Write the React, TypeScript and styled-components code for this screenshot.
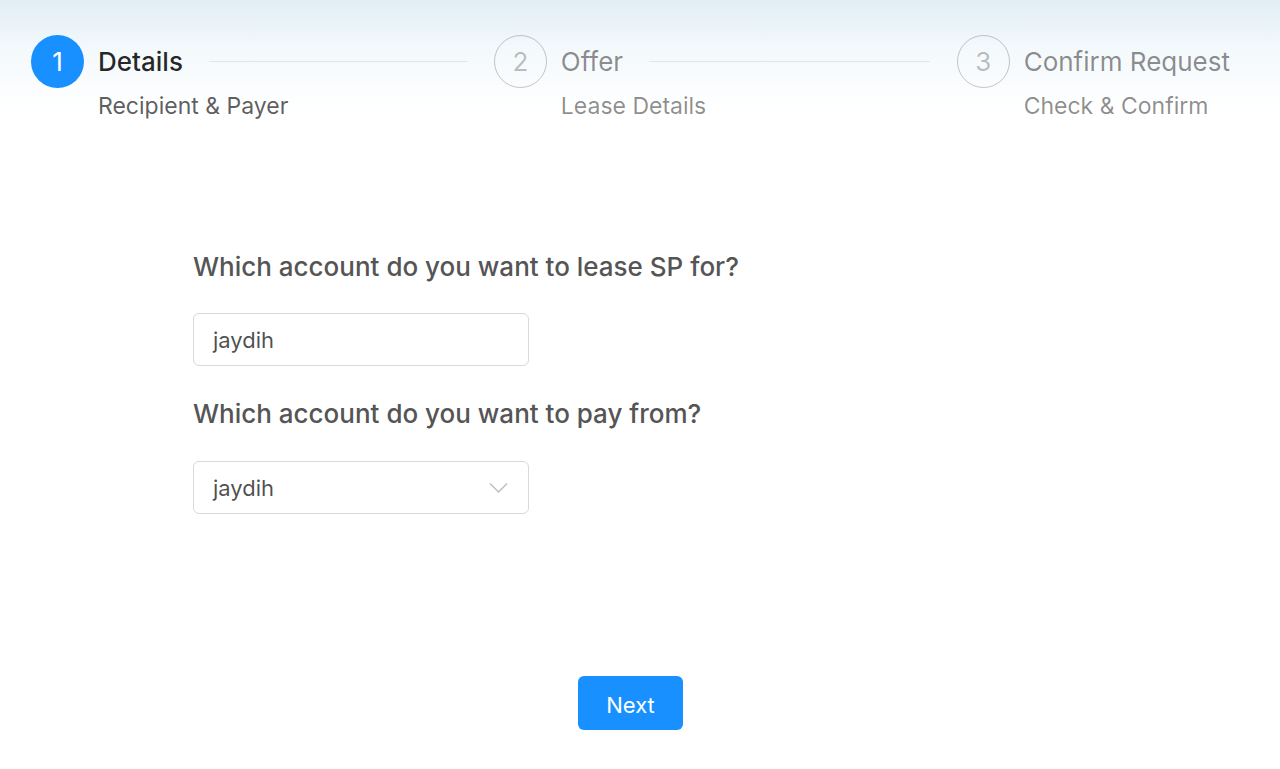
import React from "react";
import styled, { createGlobalStyle } from "styled-components";

const Global = createGlobalStyle`
  html, body { margin: 0; padding: 0; background: #fff; }
  body { font-family: Inter, "Liberation Sans", sans-serif; -webkit-font-smoothing: antialiased; }
  * { box-sizing: border-box; }
`;

const Page = styled.div`
  min-height: 769px;
  background: linear-gradient(180deg, #e1eef6 0px, #f4f9fc 50px, #ffffff 110px);
`;

const Steps = styled.div`
  display: flex;
  padding: 35px 50px 0 31px;
`;

const Step = styled.div<{ $last?: boolean; $first?: boolean }>`
  display: flex;
  flex: ${(p) => (p.$last ? "none" : "1")};
  padding-left: ${(p) => (p.$first ? "0" : "27px")};
`;

const Icon = styled.div<{ $active?: boolean }>`
  width: 53px;
  height: 53px;
  flex: none;
  border-radius: 50%;
  display: flex;
  align-items: center;
  justify-content: center;
  font-size: 26px;
  margin-right: 14px;
  background: ${(p) => (p.$active ? "#1890ff" : "transparent")};
  color: ${(p) => (p.$active ? "#fff" : "rgba(0,0,0,0.25)")};
  border: ${(p) => (p.$active ? "none" : "1.6px solid rgba(0,0,0,0.22)")};
`;

const Content = styled.div`
  flex: 1;
  display: flex;
  flex-direction: column;
`;

const TitleRow = styled.div`
  display: flex;
  align-items: center;
  height: 53px;
`;

const Title = styled.div<{ $active?: boolean }>`
  font-size: 26px;
  white-space: nowrap;
  font-weight: ${(p) => (p.$active ? 500 : 400)};
  color: ${(p) => (p.$active ? "rgba(0,0,0,0.85)" : "rgba(0,0,0,0.45)")};
`;

const Line = styled.div`
  flex: 1;
  height: 1.5px;
  background: #e3e6e9;
  margin-left: 26px;
`;

const Desc = styled.div<{ $active?: boolean }>`
  font-size: 23px;
  line-height: 36px;
  white-space: nowrap;
  color: ${(p) => (p.$active ? "rgba(0,0,0,0.65)" : "rgba(0,0,0,0.45)")};
`;

const Form = styled.div`
  display: flex;
  flex-direction: column;
  padding: 125px 0 0 193px;
`;

const Label = styled.div<{ $gap?: number }>`
  font-size: 26px;
  font-weight: 500;
  color: #555;
  line-height: 36px;
  margin-top: ${(p) => p.$gap ?? 0}px;
`;

const Field = styled.div<{ $gap?: number }>`
  margin-top: ${(p) => p.$gap ?? 28}px;
  width: 336px;
  height: 53px;
  border: 1.5px solid #d9d9d9;
  border-radius: 6px;
  display: flex;
  align-items: center;
  justify-content: space-between;
  padding: 0 20px 0 19px;
  font-size: 22px;
  color: rgba(0,0,0,0.7);
  background: #fff;
`;

const Chevron = styled.svg`
  width: 19px;
  height: 12px;
`;

const Footer = styled.div`
  display: flex;
  justify-content: center;
  padding: 162px 19px 0 0;
`;

const Button = styled.button`
  width: 105px;
  height: 54px;
  border: none;
  border-radius: 6px;
  background: #1890ff;
  color: #fff;
  font-family: inherit;
  font-size: 22px;
  padding: 4px 0 0;
  cursor: pointer;
`;

const steps = [
  { n: 1, title: "Details", desc: "Recipient & Payer" },
  { n: 2, title: "Offer", desc: "Lease Details" },
  { n: 3, title: "Confirm Request", desc: "Check & Confirm" },
];

export default function App() {
  return (
    <Page>
      <Global />
      <Steps>
        {steps.map((s, i) => {
          const active = i === 0;
          const last = i === steps.length - 1;
          return (
            <Step key={s.n} $first={i === 0} $last={last}>
              <Icon $active={active}>{s.n}</Icon>
              <Content>
                <TitleRow>
                  <Title $active={active}>{s.title}</Title>
                  {!last && <Line />}
                </TitleRow>
                <Desc $active={active}>{s.desc}</Desc>
              </Content>
            </Step>
          );
        })}
      </Steps>
      <Form>
        <Label>Which account do you want to lease SP for?</Label>
        <Field>jaydih</Field>
        <Label $gap={30}>Which account do you want to pay from?</Label>
        <Field $gap={29}>
          jaydih
          <Chevron viewBox="0 0 19 12" fill="none">
            <path d="M1 1.5 L9.5 10 L18 1.5" stroke="#bfbfbf" strokeWidth="1.5" />
          </Chevron>
        </Field>
      </Form>
      <Footer>
        <Button>Next</Button>
      </Footer>
    </Page>
  );
}
